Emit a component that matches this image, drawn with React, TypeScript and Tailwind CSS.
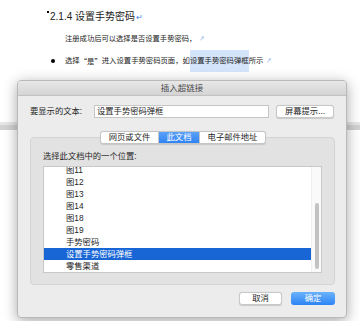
import React from "react";

const items = ["图11", "图12", "图13", "图14", "图18", "图19", "手势密码", "设置手势密码弹框", "零售渠道"];

export default function App() {
  return (
    <div className="relative w-[360px] h-[321px] overflow-hidden bg-white font-['Liberation_Sans','Noto_Sans_CJK_SC',sans-serif] text-[#222]">
      {/* document */}
      <div className="flex flex-col pt-[6px]">
        <div className="flex items-center h-[22px] pl-[47px] text-[10px] leading-[22px]">
          <span className="self-start mt-[5px] mr-[1px] w-[2px] h-[2px] bg-black" />
          <span>2.1.4&nbsp;设置手势密码</span>
          <span className="text-[8px] text-[#3b7de0] ml-[1px] mt-[2px]">↵</span>
        </div>
        <div className="flex items-center h-[22px] pl-[65px] text-[7.3px]">
          <span>注册成功后可以选择是否设置手势密码，</span>
          <span className="ml-[3px] text-[5px] text-[#3b7de0]">↗</span>
        </div>
        <div className="flex items-center h-[22px] pl-[51px] text-[7.35px]">
          <span className="w-[4px] h-[4px] rounded-full bg-black mr-[10px]" />
          <span>选择</span>
          <span className="font-['Noto_Sans_CJK_SC',sans-serif]">“是”</span>
          <span>进入设置手势密码页面，如</span>
          <span className="h-[22px] leading-[22px] bg-[#d4e4fa]">设置手势密码弹框</span>
          <span>所示</span>
          <span className="ml-[3px] text-[5px] text-[#3b7de0]">↗</span>
        </div>
        <div className="h-[50px]" />
        <div className="h-[3px] bg-[#e6e6e6]" />
        <div className="h-[5px] bg-[#d2d2d2]" />
        <div className="h-[133px]" />
        <div className="ml-[124px] w-[146px] h-[4px] bg-[#3c4b36]" />
      </div>

      {/* dialog */}
      <div className="absolute left-[17px] top-[80px] w-[330px] h-[238px] flex flex-col bg-[#ececec] rounded-[4px] border border-[#b9b9b9] shadow-[0_3px_14px_rgba(0,0,0,0.35)] overflow-hidden">
        <div className="h-[15px] shrink-0 flex items-center justify-center bg-gradient-to-b from-[#e9e8e9] to-[#d5d4d5] border-b border-[#c2c2c2] text-[8.5px] text-[#4a4a4a]">
          插入超链接
        </div>
        <div className="flex flex-col px-[12px] pt-[9px] text-[8.3px] text-[#262626]">
          <div className="flex items-center h-[13px]">
            <span className="w-[64px]">要显示的文本:</span>
            <div className="w-[175px] h-[13px] bg-white border border-[#c6c6c6] flex items-center pl-[2px]">设置手势密码弹框</div>
            <div className="ml-[7px] w-[58px] h-[13px] bg-white border border-[#c8c8c8] rounded-[3px] flex items-center justify-center shadow-[0_0.5px_1px_rgba(0,0,0,0.15)]">屏幕提示...</div>
          </div>
          <div className="relative mt-[19px] w-[305px] h-[148px] bg-[#e2e2e2] border border-[#d4d4d4] rounded-[4px] flex flex-col px-[12px]">
            <div className="absolute left-[69px] top-[-7px] flex h-[13px] rounded-[3px] border border-[#c5c5c5] bg-white overflow-hidden shadow-[0_0.5px_1px_rgba(0,0,0,0.12)]">
              <div className="w-[58px] flex items-center justify-center border-r border-[#c5c5c5]">网页或文件</div>
              <div className="w-[40px] flex items-center justify-center bg-gradient-to-b from-[#5aa2f8] to-[#2f83f3] text-white">此文档</div>
              <div className="w-[66px] flex items-center justify-center border-l border-[#c5c5c5]">电子邮件地址</div>
            </div>
            <div className="mt-[13px] h-[11px] leading-[11px]">选择此文档中的一个位置:</div>
            <div className="mt-[4px] h-[107px] bg-white border border-[#c8c8c8] flex overflow-hidden">
              <div className="flex-1 flex flex-col mt-[-3px]">
                {items.map((t, i) => (
                  <div
                    key={t}
                    className={
                      i === 7
                        ? "h-[12px] shrink-0 flex items-center pl-[22px] bg-[#1866d6] text-white"
                        : "h-[12px] shrink-0 flex items-center pl-[22px]"
                    }
                  >
                    {t}
                  </div>
                ))}
              </div>
              <div className="w-[10px] bg-[#fafafa] border-l border-[#efefef] flex flex-col items-center pt-[36px]">
                <div className="w-[4px] h-[66px] rounded-full bg-[#c2c2c2]" />
              </div>
            </div>
          </div>
          <div className="flex justify-end mt-[7px] gap-[9px]">
            <div className="w-[43px] h-[13px] bg-white border border-[#c8c8c8] rounded-[3px] flex items-center justify-center shadow-[0_0.5px_1px_rgba(0,0,0,0.15)]">取消</div>
            <div className="w-[44px] h-[13px] rounded-[3px] flex items-center justify-center text-white bg-gradient-to-b from-[#6ab2fa] to-[#2b83f4] mr-[-1px]">确定</div>
          </div>
        </div>
      </div>
    </div>
  );
}
